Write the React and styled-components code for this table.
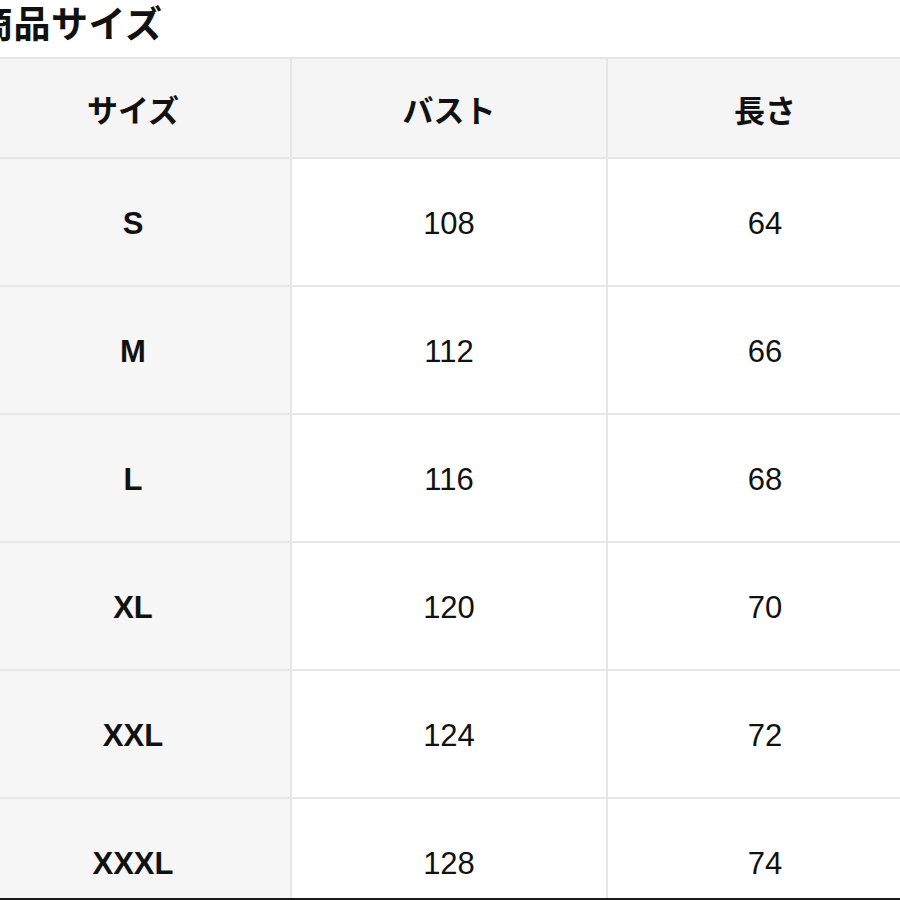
import styled, { createGlobalStyle } from "styled-components";

const GlobalStyle = createGlobalStyle`
  html, body {
    margin: 0;
    padding: 0;
    background: #ffffff;
    overflow: hidden;
  }
  body {
    font-family: "Liberation Sans", "Noto Sans CJK JP", sans-serif;
    color: #111111;
  }
`;

const rows = [
  { size: "S", bust: 108, length: 64 },
  { size: "M", bust: 112, length: 66 },
  { size: "L", bust: 116, length: 68 },
  { size: "XL", bust: 120, length: 70 },
  { size: "XXL", bust: 124, length: 72 },
  { size: "XXXL", bust: 128, length: 74 },
];

const App = () => {
  return (
    <Page>
      <GlobalStyle />
      <Section>
        <Title>商品サイズ</Title>
        <Table>
          <HeadCell>サイズ</HeadCell>
          <HeadCell>バスト</HeadCell>
          <HeadCell>長さ</HeadCell>
          {rows.map((r) => (
            <Row key={r.size}>
              <LabelCell>{r.size}</LabelCell>
              <ValueCell>{r.bust}</ValueCell>
              <ValueCell>{r.length}</ValueCell>
            </Row>
          ))}
        </Table>
      </Section>
    </Page>
  );
};

const Page = styled.div`
  width: 900px;
  height: 898px;
  overflow: hidden;
  border-bottom: 2px solid #1a1a1a;
`;

const Section = styled.div`
  display: flex;
  flex-direction: column;
  margin-left: -24px;
  width: 946px;
`;

const Title = styled.div`
  font-family: "Noto Sans CJK JP", sans-serif;
  font-size: 37px;
  font-weight: 700;
  line-height: 45px;
  height: 45px;
  margin-bottom: 12px;
  letter-spacing: 0.5px;
`;

const Table = styled.div`
  display: grid;
  grid-template-columns: 314px 314px 314px;
  grid-auto-rows: 126px;
  grid-template-rows: 98px;
  gap: 2px;
  padding-top: 2px;
  background: #e6e6e6;
`;

const Row = styled.div`
  display: contents;
`;

const Cell = styled.div`
  display: flex;
  align-items: center;
  justify-content: center;
  padding-top: 3px;
  font-size: 31px;
`;

const HeadCell = styled(Cell)`
  background: #f5f5f5;
  font-family: "Noto Sans CJK JP", sans-serif;
  font-weight: 700;
  font-size: 31px;
  padding-top: 0;
`;

const LabelCell = styled(Cell)`
  background: #f6f6f6;
  font-weight: 700;
`;

const ValueCell = styled(Cell)`
  background: #ffffff;
  font-weight: 400;
`;

export default App;
